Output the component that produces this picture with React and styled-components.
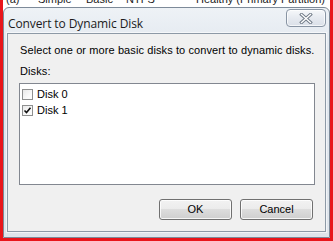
import styled, { createGlobalStyle } from 'styled-components'

const Global = createGlobalStyle`
    html, body {
        margin: 0;
        padding: 0;
        background: #fff;
        overflow: hidden;
    }
`

const Screen = styled.div`
    box-sizing: border-box;
    width: 333px;
    height: 241px;
    border: 3px solid #e8151b;
    border-top: none;
    background: #fff;
    overflow: hidden;
    display: flex;
    flex-direction: column;
`

const BackRow = styled.div`
    display: grid;
    grid-template-columns: 32px 48px 40px 70px 1fr;
    height: 7px;
    overflow: hidden;
    padding-left: 3px;
    font-family: "Liberation Sans", Arial, sans-serif;
    font-size: 11px;
    line-height: 13px;
    color: #222;
    white-space: nowrap;

    span {
        margin-top: -7px;
    }
`

const Window = styled.div`
    box-sizing: border-box;
    flex: 1;
    display: flex;
    flex-direction: column;
    border: 1px solid #7d8a99;
    border-radius: 6px 6px 0 0;
    background: linear-gradient(#eef2f6, #e2e8ef 40px, #dfe5ec);
    padding: 0 3px 5px 3px;
`

const TitleBar = styled.div`
    height: 25px;
    display: flex;
    align-items: flex-start;
    justify-content: space-between;
`

const Title = styled.div`
    margin-top: 9px;
    margin-left: 1px;
    font-family: "Open Sans", "Noto Sans", sans-serif;
    font-size: 12px;
    line-height: 14px;
    color: #1b1b1b;
    letter-spacing: -0.1px;
`

const CloseButton = styled.div`
    box-sizing: border-box;
    width: 40px;
    height: 18px;
    margin-top: 1px;
    border: 1px solid #8894a3;
    border-radius: 4px;
    background: linear-gradient(#f6f8fa, #e6eaf0 50%, #dae0e8);
    box-shadow: inset 0 0 0 1px rgba(255, 255, 255, 0.7);
    display: flex;
    align-items: center;
    justify-content: center;
`

const Panel = styled.div`
    box-sizing: border-box;
    flex: 1;
    display: flex;
    flex-direction: column;
    background: #f0f0f0;
    border: 1px solid #8d99a6;
    box-shadow: 0 0 0 1px rgba(255, 255, 255, 0.6);
    padding: 10px 10px 0 11px;
    font-family: "Liberation Sans", Arial, sans-serif;
    font-size: 11px;
    line-height: 13px;
    color: #000;
`

const Label = styled.div`
    margin-left: 1px;
    margin-top: ${p => p.$top || 0}px;
    letter-spacing: 0.1px;
`

const ListBox = styled.div`
    box-sizing: border-box;
    height: 102px;
    margin-top: 5px;
    background: #fff;
    border: 1px solid #828790;
    padding: 4px 2px;
    display: flex;
    flex-direction: column;
    gap: 3px;
`

const Item = styled.label`
    display: flex;
    align-items: center;
    gap: 4px;
    height: 13px;
`

const Box = styled.span`
    box-sizing: border-box;
    width: 11px;
    height: 11px;
    border: 1px solid #8e8f8f;
    background: linear-gradient(135deg, #e8e8e8, #fbfbfb 70%);
    display: flex;
    align-items: center;
    justify-content: center;
`

const Buttons = styled.div`
    display: flex;
    justify-content: flex-end;
    gap: 8px;
    margin-top: 14px;
    margin-right: 2px;
`

const Button = styled.div`
    box-sizing: border-box;
    width: 73px;
    height: 21px;
    border: 1px solid #707070;
    border-radius: 3px;
    background: linear-gradient(#f2f2f2, #ebebeb 50%, #dddddd 50%, #cfcfcf);
    box-shadow: inset 0 0 0 1px rgba(255, 255, 255, 0.8);
    display: flex;
    align-items: center;
    justify-content: center;
    font-size: 11px;
    color: #000;
`

const Check = () => (
    <svg width="9" height="9" viewBox="0 0 9 9">
        <path d="M1.5 4.5 L3.5 6.5 L7.5 1.8" stroke="#111" strokeWidth="1.6" fill="none" />
    </svg>
)

const CloseGlyph = () => (
    <svg width="14" height="11" viewBox="0 0 14 11">
        <path d="M2.5 1.5 L11.5 9.5 M11.5 1.5 L2.5 9.5" stroke="#6d7885" strokeWidth="3.2" strokeLinecap="square" />
        <path d="M2.5 1.5 L11.5 9.5 M11.5 1.5 L2.5 9.5" stroke="#fff" strokeWidth="1.4" strokeLinecap="square" />
    </svg>
)

const disks = [
    { name: 'Disk 0', checked: false },
    { name: 'Disk 1', checked: true },
]

export default function App() {
    return (
        <>
            <Global />
            <Screen>
                <BackRow>
                    <span>(a)</span>
                    <span>Simple</span>
                    <span>Basic</span>
                    <span>NTFS</span>
                    <span>Healthy (Primary Partition)</span>
                </BackRow>
                <Window>
                    <TitleBar>
                        <Title>Convert to Dynamic Disk</Title>
                        <CloseButton>
                            <CloseGlyph />
                        </CloseButton>
                    </TitleBar>
                    <Panel>
                        <Label>Select one or more basic disks to convert to dynamic disks.</Label>
                        <Label $top={8}>Disks:</Label>
                        <ListBox>
                            {disks.map(d => (
                                <Item key={d.name}>
                                    <Box>{d.checked && <Check />}</Box>
                                    {d.name}
                                </Item>
                            ))}
                        </ListBox>
                        <Buttons>
                            <Button>OK</Button>
                            <Button>Cancel</Button>
                        </Buttons>
                    </Panel>
                </Window>
            </Screen>
        </>
    )
}
